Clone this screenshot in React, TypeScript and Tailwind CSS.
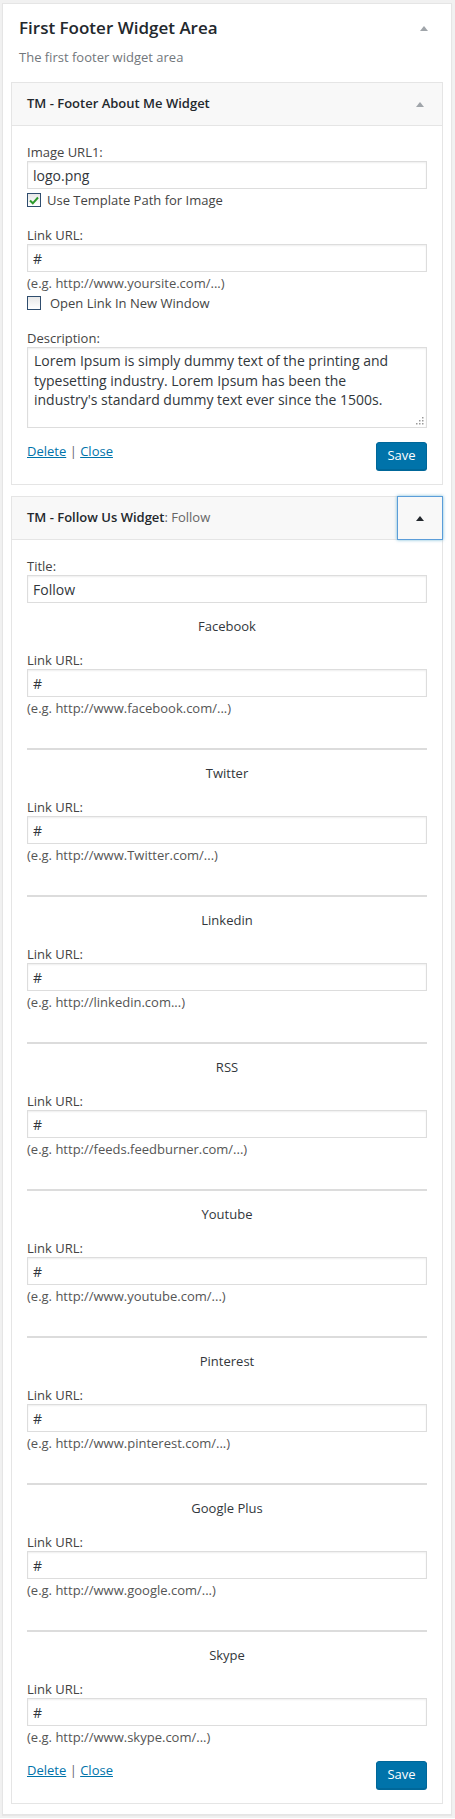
import React from "react";

const socials = [
  { name: "Facebook", hint: "(e.g. http://www.facebook.com/...)" },
  { name: "Twitter", hint: "(e.g. http://www.Twitter.com/...)" },
  { name: "Linkedin", hint: "(e.g. http://linkedin.com...)" },
  { name: "RSS", hint: "(e.g. http://feeds.feedburner.com/...)" },
  { name: "Youtube", hint: "(e.g. http://www.youtube.com/...)" },
  { name: "Pinterest", hint: "(e.g. http://www.pinterest.com/...)" },
  { name: "Google Plus", hint: "(e.g. http://www.google.com/...)" },
  { name: "Skype", hint: "(e.g. http://www.skype.com/...)" },
];

const Arrow = ({ dark = false }: { dark?: boolean }) => (
  <svg width="8" height="5" viewBox="0 0 8 5">
    <polygon points="0,5 4,0 8,5" fill={dark ? "#23282d" : "#a0a5aa"} />
  </svg>
);

const Label = ({ children }: { children: React.ReactNode }) => (
  <div className="text-[13px] leading-[18px] text-[#444]">{children}</div>
);

const TextInput = ({ value }: { value: string }) => (
  <input
    readOnly
    value={value}
    className="block w-full h-[28px] border border-[#dddddd] bg-white px-[5px] text-[14px] text-[#32373c] shadow-[inset_0_1px_2px_rgba(0,0,0,0.07)] outline-none"
    style={{ fontFamily: "inherit" }}
  />
);

const Hint = ({ children }: { children: React.ReactNode }) => (
  <div className="mt-[2px] text-[13px] leading-[18px] text-[#555]">{children}</div>
);

const Checkbox = ({ checked, label, gap }: { checked: boolean; label: string; gap: string }) => (
  <div className="flex items-center h-[18px]">
    <span className="flex items-center justify-center w-[14px] h-[14px] border border-[#2f4d6e] bg-gradient-to-b from-[#e8e8e8] to-white">
      {checked && (
        <svg width="10" height="9" viewBox="0 0 10 9">
          <path d="M1 4.5 L3.8 7.3 L9 1.5" stroke="#2c9a2c" strokeWidth="2" fill="none" />
        </svg>
      )}
    </span>
    <span className={`${gap} text-[13px] leading-[18px] text-[#444]`}>{label}</span>
  </div>
);

const Actions = () => (
  <div className="flex justify-between items-start">
    <div className="text-[13px] leading-[18px] text-[#666]">
      <a className="text-[#0073aa] underline">Delete</a> | <a className="text-[#0073aa] underline">Close</a>
    </div>
    <button className="h-[28px] w-[51px] rounded-[3px] border border-[#006799] bg-[#0073aa] text-[13px] text-white shadow-[0_1px_0_#006799]">
      Save
    </button>
  </div>
);

export default function App() {
  return (
    <div className="bg-[#f1f1f1] pt-[3px] pb-[3px] pl-[2px]" style={{ fontFamily: '"Open Sans", "Noto Sans", sans-serif' }}>
      <div className="w-[450px] border border-[#e5e5e5] bg-white pb-[10px] shadow-[0_1px_1px_rgba(0,0,0,0.04)]">
        {/* Sidebar header */}
        <div className="flex items-center pt-[12px] pl-[16px] pr-[23px]">
          <h2 className="flex-1 text-[17px] leading-[24px] font-semibold text-[#23282d]">First Footer Widget Area</h2>
          <Arrow />
        </div>
        <p className="mt-[8px] pl-[16px] text-[13px] leading-[18px] text-[#72777c]">The first footer widget area</p>

        {/* About me widget */}
        <div className="mx-[8px] mt-[16px] border border-[#e5e5e5] bg-white">
          <div className="flex items-center h-[43px] border-b border-[#e5e5e5] bg-[#f8f8f8]">
            <div className="flex-1 pl-[15px] text-[13px] font-semibold text-[#23282d]">TM - Footer About Me Widget</div>
            <div className="flex items-center justify-center w-[44px] h-full">
              <Arrow />
            </div>
          </div>
          <div className="px-[15px] pt-[17px] pb-[14px]">
            <Label>Image URL1:</Label>
            <TextInput value="logo.png" />
            <div className="mt-[2px]">
              <Checkbox checked label="Use Template Path for Image" gap="ml-[6px]" />
            </div>
            <div className="mt-[17px]">
              <Label>Link URL:</Label>
            </div>
            <TextInput value="#" />
            <Hint>(e.g. http://www.yoursite.com/...)</Hint>
            <div className="mt-[2px]">
              <Checkbox checked={false} label="Open Link In New Window" gap="ml-[9px]" />
            </div>
            <div className="mt-[17px]">
              <Label>Description:</Label>
            </div>
            <div className="relative">
              <textarea
                readOnly
                value="Lorem Ipsum is simply dummy text of the printing and typesetting industry. Lorem Ipsum has been the industry's standard dummy text ever since the 1500s."
                className="block w-full h-[81px] resize-none border border-[#dddddd] bg-white pl-[6px] pr-[16px] pt-[3px] text-[14px] leading-[19.5px] text-[#32373c] shadow-[inset_0_1px_2px_rgba(0,0,0,0.07)] outline-none"
                style={{ fontFamily: "inherit" }}
              />
              <svg className="absolute right-[3px] bottom-[3px]" width="9" height="9" viewBox="0 0 9 9">
                <rect x="7" y="1" width="1.5" height="1.5" fill="#9a9a9a" />
                <rect x="4" y="4" width="1.5" height="1.5" fill="#9a9a9a" />
                <rect x="7" y="4" width="1.5" height="1.5" fill="#9a9a9a" />
                <rect x="1" y="7" width="1.5" height="1.5" fill="#9a9a9a" />
                <rect x="4" y="7" width="1.5" height="1.5" fill="#9a9a9a" />
                <rect x="7" y="7" width="1.5" height="1.5" fill="#9a9a9a" />
              </svg>
            </div>
            <div className="mt-[14px]">
              <Actions />
            </div>
          </div>
        </div>

        {/* Follow us widget */}
        <div className="mx-[8px] mt-[11px] border border-[#e5e5e5] bg-white">
          <div className="flex items-center h-[43px] border-b border-[#e5e5e5] bg-[#f8f8f8]">
            <div className="flex-1 pl-[15px] text-[13px] text-[#23282d]">
              <span className="font-semibold">TM - Follow Us Widget</span>
              <span className="text-[#666]">: Follow</span>
            </div>
            <div className="flex items-center justify-center w-[44px] h-[42px] shadow-[0_0_0_1px_#5b9dd9,0_0_3px_1px_rgba(30,140,190,0.6)]">
              <Arrow dark />
            </div>
          </div>
          <div className="px-[15px] pt-[17px] pb-[14px]">
            <Label>Title:</Label>
            <TextInput value="Follow" />
            <div className="mt-[14px]">
              {socials.map((s, i) => (
                <div key={s.name}>
                  <div className="text-center text-[13px] leading-[18px] text-[#32373c]">{s.name}</div>
                  <div className="mt-[16px]">
                    <Label>Link URL:</Label>
                  </div>
                  <TextInput value="#" />
                  <Hint>{s.hint}</Hint>
                  {i < socials.length - 1 && <div className="mt-[31px] mb-[14px] h-[2px] bg-[#dcdcdc]" />}
                </div>
              ))}
            </div>
            <div className="mt-[15px]">
              <Actions />
            </div>
          </div>
        </div>
      </div>
    </div>
  );
}
